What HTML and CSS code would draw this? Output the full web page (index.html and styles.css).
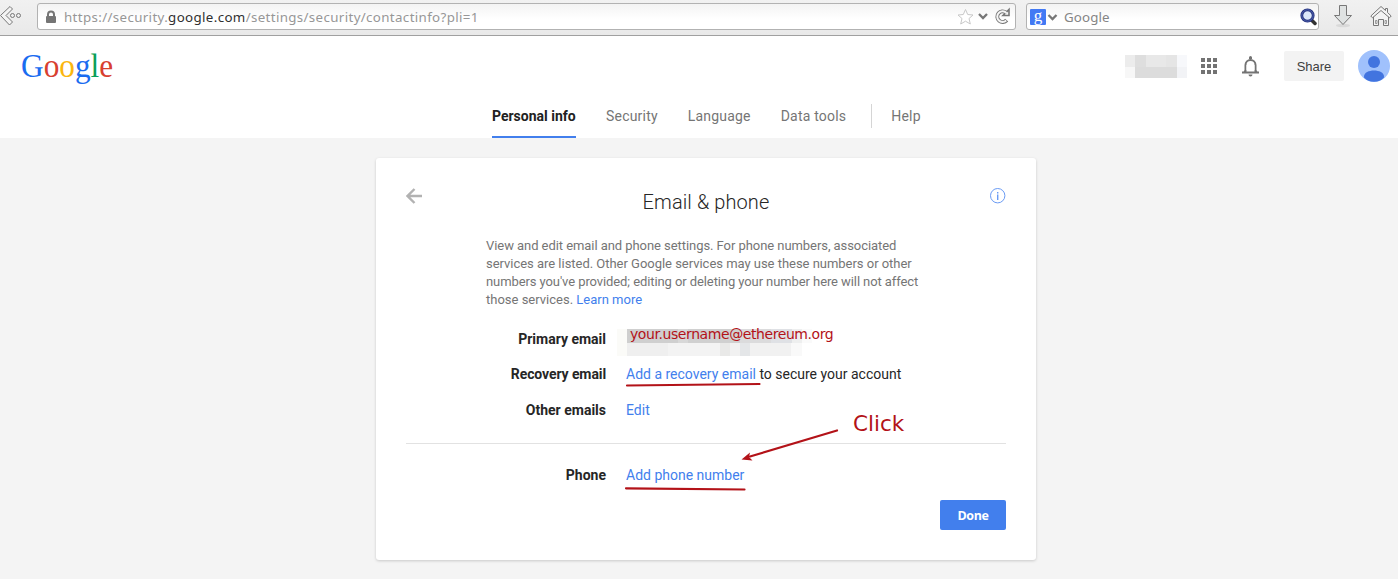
FILE: index.html
```html
<!DOCTYPE html>
<html lang="en">
<head>
<meta charset="utf-8">
<title>Email &amp; phone</title>
<link rel="stylesheet" href="styles.css">
</head>
<body>
<div class="toolbar">
  <svg class="back-btn" width="24" height="35" viewBox="0 0 24 35"><path d="M10 6.500 12.500 9 6 15.500 12.500 22 9.500 25 .5 15.500z" fill="#f4f4f4" stroke="#777"/><g fill="#eee" stroke="#777"><circle cx="12.500" cy="15.500" r="2"/><circle cx="18.500" cy="15.500" r="2"/></g></svg>
  <div class="field url">
    <svg class="lock" width="12" height="14" viewBox="0 0 12 14"><path d="M3 7V4.500a3 3 0 0 1 6 0V7" fill="none" stroke="#757575" stroke-width="2"/><rect x="1" y="6" width="10" height="7" rx="1" fill="#757575"/></svg>
    <span class="address">https://security.<b>google.com</b>/settings/security/contactinfo?pli=1</span>
    <svg class="url-icons" width="56" height="20" viewBox="0 0 56 20"><path d="M8.500 2.500 10.700 7.500 16 8 12 11.500 13.300 17 8.500 14.200 3.700 17 5 11.500 1 8 6.300 7.500z" fill="#fff" stroke="#c8c8c8"/><path d="m22 7 4 4 4-4" fill="none" stroke="#777" stroke-width="2.300"/><path d="M49 5.600a5.300 5.300 0 1 0 .7 7.500" fill="none" stroke="#777" stroke-width="4"/><path d="M46 8.500h6v-6L49.500 5z" fill="#f6f6f6" stroke="#777" stroke-width="1.600"/><path d="M49.500 6.100a5.300 5.300 0 1 0-.3 7.400" fill="none" stroke="#f6f6f6" stroke-width="2"/></svg>
  </div>
  <div class="field search">
    <svg class="engine" width="28" height="16" viewBox="0 0 28 16"><rect width="16" height="16" rx="1" fill="#4279f4"/><text x="8" y="11.500" class="engine-g">g</text><path d="m18.500 6 4 4 4-4" fill="none" stroke="#777" stroke-width="2.300"/></svg>
    <span class="search-label">Google</span>
    <svg class="magnifier" width="18" height="18" viewBox="0 0 18 18"><path d="m12 11.500 4 4" stroke="#333" stroke-width="3.500" stroke-linecap="round"/><circle cx="8.500" cy="7.500" r="5.700" fill="#dce8fa" stroke="#25317d" stroke-width="2.800"/><circle cx="8.500" cy="7.500" r="5.700" fill="none" stroke="#5a72bd" stroke-width=".8"/></svg>
  </div>
  <svg class="download" width="20" height="24" viewBox="0 0 20 24"><ellipse cx="10" cy="21.500" rx="7" ry="1.800" fill="#d9d9d9"/><path d="M6.500 1.500h7v10H18.500L10 20.500 1.500 11.500h5z" fill="#dfe2e2" stroke="#777"/></svg>
  <svg class="home" width="22" height="23" viewBox="0 0 22 23"><g fill="#f3f3f3" stroke="#777"><path d="M3.500 11v9.500h5v-6h5v6h5V11L11 4z"/><path d="M11 1.500.8 11l1.700 1.800L11 5.500l8.500 7.300 1.700-1.800-3.700-3.500V3.500h-2v2z"/><path d="M5.500 15.500h1.500v3H5.500zM15 15.500h1.500v3H15z" stroke-width=".7"/></g></svg>
</div>
<header class="header">
  <svg class="logo" width="96" height="40" viewBox="0 0 96 40" aria-label="Google"><text class="logo-text" transform="scale(.92 1)" x="-1" y="26.500"><tspan fill="#1a6cf0">G</tspan><tspan fill="#d8402f">o</tspan><tspan fill="#fbb60f">o</tspan><tspan fill="#1a6cf0">g</tspan><tspan fill="#0a9f5a">l</tspan><tspan fill="#d8402f">e</tspan></text></svg>
  <div class="account">
    <svg class="mosaic-name" width="62" height="23" viewBox="0 0 62 23" shape-rendering="crispEdges"><path fill="#ececec" d="M0 0h10v12H0z"/><path fill="#dedede" d="M10 0h11v12H10z"/><path fill="#e8e8e8" d="M21 0h20v12H21z"/><path fill="#e5e5e5" d="M41 0h11v12H41z"/><path fill="#f7f8fb" d="M52 0h10v12H52z"/><path fill="#f7f7f7" d="M0 12h10v11H0z"/><path fill="#dcdcdc" d="M10 12h42v11H10z"/><path fill="#f2f3f6" d="M52 12h10v11H52z"/></svg>
    <svg class="apps" width="16" height="16" viewBox="0 0 16 16" fill="#737373"><path d="M0 0h4v4H0zM6 0h4v4H6zM12 0h4v4h-4zM0 6h4v4H0zM6 6h4v4H6zM12 6h4v4h-4zM0 12h4v4H0zM6 12h4v4H6zM12 12h4v4h-4z"/></svg>
    <svg class="bell" width="17" height="21" viewBox="0 0 17 21"><path d="M3.500 16.500V9a5 5 0 0 1 10 0v7.500" fill="none" stroke="#737373" stroke-width="2"/><path d="M0 15.500h1.500L3 14h11l1.500 1.500H17V17.500H0zM7 3V1.500a1.500 1.500 0 0 1 3 0V3zM6.500 18.500h4a2 2 0 0 1-4 0z" fill="#737373"/><path d="M4.500 9h8v6.500h-8z" fill="#fff"/></svg>
    <div class="share">Share</div>
    <svg class="avatar" width="36" height="32" viewBox="-4 0 36 32"><circle cx="16" cy="16" r="16" fill="#a0c1fc"/><circle cx="16" cy="12" r="6" fill="#4274df"/><path d="M6 27.500v-1c0-4 5-6 10-6s10 2 10 6v1c-2.500 3-6 4.300-10 4.300S8.500 30.500 6 27.500z" fill="#4274df"/></svg>
  </div>
</header>
<nav class="tabs">
  <a class="tab active">Personal info</a><a class="tab">Security</a><a class="tab">Language</a><a class="tab">Data tools</a><a class="tab help">Help</a>
</nav>
<main class="page">
  <section class="card">
    <div class="card-head">
      <svg class="arrow-back" width="16" height="16" viewBox="0 0 16 16"><path d="M16 8H2M8.500 1 1.500 8l7 7" fill="none" stroke="#b2b2b2" stroke-width="2.400"/></svg>
      <h1 class="title">Email &amp; phone</h1>
      <svg class="info" width="16" height="16" viewBox="0 0 16 16"><circle cx="7.700" cy="7.700" r="7.200" fill="none" stroke="#6a9bf4"/><path d="M7 4h1.400v1.500H7zM7 6.500h1.400V12H7z" fill="#6a9bf4"/></svg>
    </div>
    <p class="intro"><span class="l1">View and edit email and phone settings. For phone numbers, associated</span><br><span class="l2">services are listed. Other Google services may use these numbers or other</span><br><span class="l3">numbers you've provided; editing or deleting your number here will not affect</span><br>those services. <a class="link">Learn more</a></p>
    <div class="rows">
      <span class="label">Primary email</span>
      <span class="value primary"><svg class="mosaic-mail" width="206" height="27" viewBox="0 0 206 27" shape-rendering="crispEdges"><path fill="#fbfbf8" d="M0 0h10v27H0z"/><path fill="#cfcfcf" d="M10 0h51v14H10z"/><path fill="#d8d8d8" d="M61 0h10v14H61z"/><path fill="#d0d0d0" d="M71 0h52v14H71z"/><path fill="#dbdbdc" d="M123 0h31v14h-31z"/><path fill="#dfe1e5" d="M154 0h21v14h-21z"/><path fill="#eeefef" d="M175 0h10v14h-10z"/><path fill="#fafafa" d="M185 0h10v14h-10z"/><path fill="#efefef" d="M10 14h41v13H10z"/><path fill="#f3f3f3" d="M51 14h52v13H51z"/><path fill="#e9e9e8" d="M103 14h10v13h-10z"/><path fill="#e4e6e8" d="M123 14h10v13h-10z"/><path fill="#f1f1f1" d="M113 14h10v13h-10zM133 14h41v13h-41z"/><path fill="#f9f9f9" d="M174 14h11v13h-11z"/></svg><span class="username">your.username@ethereum.org</span></span>
      <span class="label recovery">Recovery email</span>
      <span class="value recovery"><a class="link">Add a recovery email</a> to secure your account</span>
      <span class="label">Other emails</span>
      <span class="value"><a class="link">Edit</a></span>
    </div>
    <div class="rows phone">
      <span class="label">Phone</span>
      <span class="value"><a class="link">Add phone number</a></span>
    </div>
    <div class="actions"><button class="done">Done</button></div>
    <svg class="marks" width="660" height="402" viewBox="376 158 660 402"><g fill="none" stroke="#b31218" stroke-width="2.200" stroke-linecap="round"><path d="M627 385.500 759.500 384M626 488.300 744.500 489.500M837 430.500 750 456.500" /></g><path d="M741.500 459.500 750 452.500 749 457 752.500 460.500z" fill="#b31218"/><text x="853" y="431" class="click">Click</text></svg>
  </section>
</main>
</body>
</html>
```
FILE: styles.css
```css
* { box-sizing: border-box; }
body { margin: 0; width: 1398px; height: 579px; overflow: hidden; background: #f4f4f4; font-family: Roboto, "Liberation Sans", sans-serif; color: #262626; }
svg { display: block; flex: none; }
.toolbar { display: flex; height: 36px; background: linear-gradient(#f1f1f1, #e9e9e9); border-bottom: 1px solid #a0a0a0; }
.back-btn { margin-right: 13px; }
.field { display: flex; align-items: center; height: 27px; margin-top: 3px; background: linear-gradient(#f3f3f3, #fff 60%); border: 1px solid #b2b2b2; border-radius: 3px; font-family: "Noto Sans", sans-serif; font-size: 13.330px; color: #979797; white-space: nowrap; }
.url { width: 979px; padding: 0 2px 0 7px; }
.lock { margin-right: 7px; }
.address { letter-spacing: .355px; }
.address b { font-weight: 400; color: #303030; }
.url-icons { margin-left: auto; }
.search { width: 293px; margin-left: 10px; padding: 0 1px 0 3px; }
.engine-g { font: 17px "Liberation Serif", serif; fill: #fff; text-anchor: middle; }
.search-label { margin-left: 6px; color: #858585; letter-spacing: .1px; }
.magnifier { margin-left: auto; }
.download { margin: 4px 0 0 14px; }
.home { margin: 5px 0 0 17px; }
.header { display: flex; justify-content: space-between; height: 62px; padding: 14px 8px 0 22px; background: #fff; }
.logo { overflow: visible; }
.logo-text { font: 34px "Liberation Serif", serif; }
.account { display: flex; align-items: center; height: 32px; }
.apps { margin-left: 14px; }
.bell { margin-left: 25px; }
.share { width: 60px; height: 30px; margin-left: 25px; background: #f3f3f3; border-radius: 2px; font: 13px/31px "Liberation Sans", sans-serif; color: #404040; text-align: center; }
.avatar { margin-left: 10px; }
.tabs { display: flex; gap: 30px; height: 40px; padding-left: 492px; background: #fff; }
.tab { height: 40px; font-size: 14px; line-height: 36px; color: #757575; white-space: nowrap; letter-spacing: .2px; }
.active { width: 84px; color: #212121; font-weight: 700; letter-spacing: 0; border-bottom: 2px solid #427fed; }
.help { height: 24px; margin: 6px 0 0 -5px; padding-left: 19px; line-height: 24px; border-left: 1px solid #d5d5d5; }
.page { padding: 20px 0 0 376px; }
.card { position: relative; width: 660px; height: 402px; padding: 30px; background: #fff; border-radius: 3px; box-shadow: 0 1px 3px rgba(0,0,0,.18); }
.card-head { display: flex; justify-content: space-between; height: 49px; }
.title { margin: 0; font-size: 20px; font-weight: 300; line-height: 28px; letter-spacing: .1px; }
.intro { margin: 0 0 0 80px; font-size: 13px; line-height: 18px; color: #757575; white-space: nowrap; }
.l1 { letter-spacing: -.06px; }
.l2 { letter-spacing: -.025px; }
.l3 { letter-spacing: -.09px; }
.link { color: #427fed; }
.rows { display: grid; grid-template-columns: 200px 1fr; column-gap: 20px; grid-auto-rows: 35.500px; margin-top: 12px; font-size: 14px; line-height: 36px; white-space: nowrap; }
.label { font-weight: 700; text-align: right; }
.recovery { line-height: 34px; }
.label.recovery { letter-spacing: -.1px; }
.primary { position: relative; }
.mosaic-mail { position: absolute; left: -9px; top: 8px; }
.username { position: absolute; left: 4px; top: 4px; font: 14px/18px "DejaVu Sans", sans-serif; letter-spacing: -.42px; color: #b31218; }
.phone { margin-top: 15px; padding-top: 13px; border-top: 1px solid #e2e2e2; }
.actions { display: flex; justify-content: flex-end; margin-top: 8px; }
.done { width: 66px; height: 30px; padding: 0; border: 0; border-radius: 2px; background: #427fed; color: #fff; font: 700 12.500px "Open Sans", sans-serif; letter-spacing: -.4px; }
.marks { position: absolute; left: 0; top: 0; }
.click { font: 21.500px "DejaVu Sans", sans-serif; fill: #b31218; }
```
